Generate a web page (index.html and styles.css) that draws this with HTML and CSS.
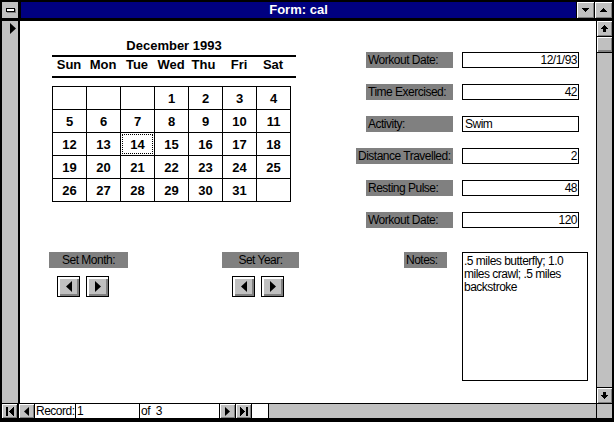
FILE: index.html
```html
<!DOCTYPE html>
<html>
<head>
<meta charset="utf-8">
<title>Form: cal</title>
<link rel="stylesheet" href="styles.css">
</head>
<body>
<div class="window">
  <div class="titlebar">
    <div class="sysmenu"><span class="sysbar"></span></div>
    <div class="caption">Form: cal</div>
    <div class="tbtn"><svg width="7" height="4" viewBox="0 0 7 4" shape-rendering="crispEdges"><polygon points="0,0 7,0 3.5,4" fill="#000"/></svg></div>
    <div class="tbtn"><svg width="7" height="4" viewBox="0 0 7 4" shape-rendering="crispEdges"><polygon points="0,4 7,4 3.5,0" fill="#000"/></svg></div>
  </div>
  <div class="main">
    <div class="selector"><svg width="6" height="11" viewBox="0 0 6 11"><polygon points="0,0 6,5.5 0,11" fill="#000"/></svg></div>
    <div class="content">
      <div class="left">
        <div class="calendar">
          <div class="month">December 1993</div>
          <div class="daynames">
            <span>Sun</span><span>Mon</span><span>Tue</span><span>Wed</span><span class="thu">Thu</span><span>Fri</span><span>Sat</span>
          </div>
          <div class="grid">
            <div class="cell"></div><div class="cell"></div><div class="cell"></div><div class="cell">1</div><div class="cell">2</div><div class="cell">3</div><div class="cell">4</div>
            <div class="cell">5</div><div class="cell">6</div><div class="cell">7</div><div class="cell">8</div><div class="cell">9</div><div class="cell">10</div><div class="cell">11</div>
            <div class="cell">12</div><div class="cell">13</div><div class="cell focus">14</div><div class="cell">15</div><div class="cell">16</div><div class="cell">17</div><div class="cell">18</div>
            <div class="cell">19</div><div class="cell">20</div><div class="cell">21</div><div class="cell">22</div><div class="cell">23</div><div class="cell">24</div><div class="cell">25</div>
            <div class="cell">26</div><div class="cell">27</div><div class="cell">28</div><div class="cell">29</div><div class="cell">30</div><div class="cell">31</div><div class="cell"></div>
          </div>
        </div>
        <div class="setters">
          <div class="setter setter-month">
            <div class="label label-center">Set Month:</div>
            <div class="arrows">
              <div class="pbtn"><svg width="6" height="11" viewBox="0 0 6 11"><polygon points="6,0 0,5.5 6,11" fill="#000"/></svg></div>
              <div class="pbtn"><svg width="6" height="11" viewBox="0 0 6 11"><polygon points="0,0 6,5.5 0,11" fill="#000"/></svg></div>
            </div>
          </div>
          <div class="setter setter-year">
            <div class="label label-center">Set Year:</div>
            <div class="arrows">
              <div class="pbtn"><svg width="6" height="11" viewBox="0 0 6 11"><polygon points="6,0 0,5.5 6,11" fill="#000"/></svg></div>
              <div class="pbtn"><svg width="6" height="11" viewBox="0 0 6 11"><polygon points="0,0 6,5.5 0,11" fill="#000"/></svg></div>
            </div>
          </div>
        </div>
      </div>
      <div class="right">
        <div class="fields">
          <div class="label">Workout Date:</div><div class="input num">12/1/93</div>
          <div class="label">Time Exercised:</div><div class="input num">42</div>
          <div class="label">Activity:</div><div class="input">Swim</div>
          <div class="label label-wide">Distance Travelled:</div><div class="input num">2</div>
          <div class="label">Resting Pulse:</div><div class="input num">48</div>
          <div class="label">Workout Date:</div><div class="input num">120</div>
          <div class="label label-notes">Notes:</div><div class="notes">.5 miles butterfly; 1.0 miles crawl; .5 miles backstroke</div>
        </div>
      </div>
    </div>
    <div class="vscroll">
      <div class="sbtn sbtn-up"><svg width="7" height="7" viewBox="0 0 7 7" shape-rendering="crispEdges"><polygon points="3.5,0 7,4 5,4 5,7 2,7 2,4 0,4" fill="#000"/></svg></div>
      <div class="thumb"></div>
      <div class="trough"></div>
      <div class="sbtn sbtn-down"><svg width="7" height="7" viewBox="0 0 7 7" shape-rendering="crispEdges"><polygon points="3.5,7 7,3 5,3 5,0 2,0 2,3 0,3" fill="#000"/></svg></div>
    </div>
  </div>
  <div class="navbar">
    <div class="nbtn"><svg width="8" height="9" viewBox="0 0 8 9" shape-rendering="crispEdges"><rect x="0" y="0" width="2" height="9" fill="#000"/><polygon points="8,0 3,4.5 8,9" fill="#000"/></svg></div>
    <div class="nbtn nbtn-gap"><svg width="5" height="9" viewBox="0 0 5 9"><polygon points="5,0 0,4.5 5,9" fill="#000"/></svg></div>
    <div class="nbox nbox-rec">Record:</div>
    <div class="nbox nbox-num">1</div>
    <div class="nbox nbox-of">of&nbsp;&nbsp;3</div>
    <div class="nbtn"><svg width="5" height="9" viewBox="0 0 5 9"><polygon points="0,0 5,4.5 0,9" fill="#000"/></svg></div>
    <div class="nbtn"><svg width="8" height="9" viewBox="0 0 8 9" shape-rendering="crispEdges"><polygon points="0,0 5,4.5 0,9" fill="#000"/><rect x="6" y="0" width="2" height="9" fill="#000"/></svg></div>
    <div class="nbox nbox-blank"></div>
    <div class="hscroll"></div>
    <div class="corner"></div>
  </div>
</div>
</body>
</html>
```

FILE: styles.css
```css
* {
  box-sizing: border-box;
}

html,
body {
  margin: 0;
  padding: 0;
  background: #000;
}

body {
  width: 614px;
  height: 422px;
  overflow: hidden;
  font-family: "Liberation Sans", Arial, sans-serif;
  color: #000;
}

.window {
  width: 614px;
  height: 422px;
  background: #000;
  padding: 2px 2px 3px 2px;
  display: flex;
  flex-direction: column;
}

/* ---------- title bar ---------- */
.titlebar {
  height: 16px;
  display: flex;
  gap: 1px;
  flex: 0 0 16px;
}

.sysmenu {
  width: 16px;
  margin-right: 2px;
  background: #c0c0c0;
  display: flex;
  align-items: center;
  justify-content: center;
}

.sysbar {
  width: 9px;
  height: 4px;
  background: #fff;
  border: 1px solid #000;
  box-shadow: 1px 1px 0 #808080;
}

.caption {
  flex: 1;
  background: #000080;
  color: #fff;
  font-weight: bold;
  font-size: 13px;
  line-height: 16px;
  text-align: center;
}

.tbtn {
  width: 17px;
  background: #c0c0c0;
  box-shadow: inset 1px 1px 0 #fff, inset -1px -1px 0 #808080;
  display: flex;
  align-items: center;
  justify-content: center;
}

/* ---------- main area ---------- */
.main {
  flex: 1;
  margin-top: 3px;
  display: flex;
  min-height: 0;
}

.selector {
  width: 16px;
  margin-right: 2px;
  background: #c0c0c0;
  padding: 2px 0 0 8px;
}

.selector svg {
  display: block;
}

.content {
  width: 576px;
  margin-right: 1px;
  background: #fff;
  display: flex;
  padding-left: 29px;
}

.left {
  flex: 0 0 307px;
  padding-top: 17px;
}

.calendar {
  margin-left: 3px;
  width: 244px;
}

.month {
  font-weight: bold;
  font-size: 13px;
  line-height: 15px;
  height: 15px;
  text-align: center;
  margin-bottom: 2px;
}

.daynames {
  border-top: 2px solid #000;
  border-bottom: 2px solid #000;
  display: grid;
  grid-template-columns: repeat(7, 34px);
  font-weight: bold;
  font-size: 13px;
  line-height: 15px;
  padding-bottom: 4px;
}

.daynames span {
  text-align: center;
}

.daynames .thu {
  margin-left: -3px;
}

.grid {
  margin-top: 8px;
  width: 239px;
  display: grid;
  grid-template-columns: repeat(7, 33px);
  grid-auto-rows: 22px;
  gap: 1px;
  padding: 1px;
  background: #000;
}

.cell {
  background: #fff;
  font-weight: bold;
  font-size: 13px;
  display: flex;
  align-items: center;
  justify-content: center;
}

.cell.focus {
  outline: 1px dotted #000;
  outline-offset: -2px;
}

/* ---------- setters ---------- */
.setters {
  margin-top: 50px;
  display: flex;
  gap: 94px;
}

.setter-month .label {
  width: 79px;
}

.setter-year .label {
  width: 77px;
}

.label {
  background: #808080;
  height: 16px;
  font-size: 12px;
  line-height: 16px;
  letter-spacing: -0.5px;
  padding-left: 2px;
  white-space: nowrap;
  width: 87px;
  justify-self: end;
}

.label-center {
  text-align: center;
  padding-left: 0;
}

.arrows {
  display: flex;
  gap: 6px;
  margin-top: 8px;
  padding-left: 8px;
}

.setter-year .arrows {
  padding-left: 10px;
}

.pbtn {
  width: 23px;
  height: 21px;
  border: 1px solid #000;
  background: #c0c0c0;
  box-shadow: inset 1px 1px 0 #fff, inset 2px 2px 0 #fff, inset -1px -1px 0 #808080, inset -2px -2px 0 #808080;
  display: flex;
  align-items: center;
  justify-content: center;
}

/* ---------- fields ---------- */
.right {
  padding-top: 31px;
}

.fields {
  display: grid;
  grid-template-columns: 97px 117px;
  column-gap: 9px;
  row-gap: 16px;
}

.label-wide {
  width: 97px;
}

.label-notes {
  width: 43px;
  margin-right: 6px;
  margin-top: 8px;
}

.input {
  height: 16px;
  border: 1px solid #000;
  background: #fff;
  font-size: 12px;
  line-height: 14px;
  letter-spacing: -0.5px;
  padding: 0 1px 0 2px;
  white-space: nowrap;
}

.input.num {
  text-align: right;
}

.notes {
  margin-top: 8px;
  width: 126px;
  height: 129px;
  border: 1px solid #000;
  background: #fff;
  font-size: 12px;
  line-height: 13px;
  letter-spacing: -0.5px;
  padding: 2px 2px 0 1px;
}

/* ---------- vertical scrollbar ---------- */
.vscroll {
  width: 15px;
  background: #c0c0c0;
  display: flex;
  flex-direction: column;
}

.sbtn {
  height: 16px;
  background: #c0c0c0;
  box-shadow: inset 1px 1px 0 #fff, inset -1px -1px 0 #808080;
  display: flex;
  align-items: center;
  justify-content: center;
}

.sbtn-up {
  border-bottom: 1px solid #000;
}

.sbtn-down {
  border-top: 1px solid #000;
}

.thumb {
  height: 16px;
  border-bottom: 1px solid #000;
  background: #c0c0c0;
  box-shadow: inset 1px 1px 0 #fff, inset -1px -2px 0 #808080;
}

.trough {
  flex: 1;
}

/* ---------- navigation bar ---------- */
.navbar {
  flex: 0 0 16px;
  height: 16px;
  padding: 1px 0;
  display: flex;
  gap: 1px;
}

.nbtn {
  width: 15px;
  background: #c0c0c0;
  box-shadow: inset 1px 1px 0 #fff, inset -1px -1px 0 #808080;
  display: flex;
  align-items: center;
  justify-content: center;
}

.nbtn-gap {
  margin-left: 1px;
}

.nbox {
  background: #fff;
  font-size: 12px;
  line-height: 14px;
  letter-spacing: -0.5px;
  padding-left: 1px;
  white-space: nowrap;
}

.nbox-rec {
  width: 40px;
}

.nbox-num {
  width: 63px;
}

.nbox-of {
  width: 79px;
}

.nbox-blank {
  width: 16px;
}

.hscroll {
  flex: 1;
  background: #c0c0c0;
}

.corner {
  width: 15px;
  background: #c0c0c0;
}
```
